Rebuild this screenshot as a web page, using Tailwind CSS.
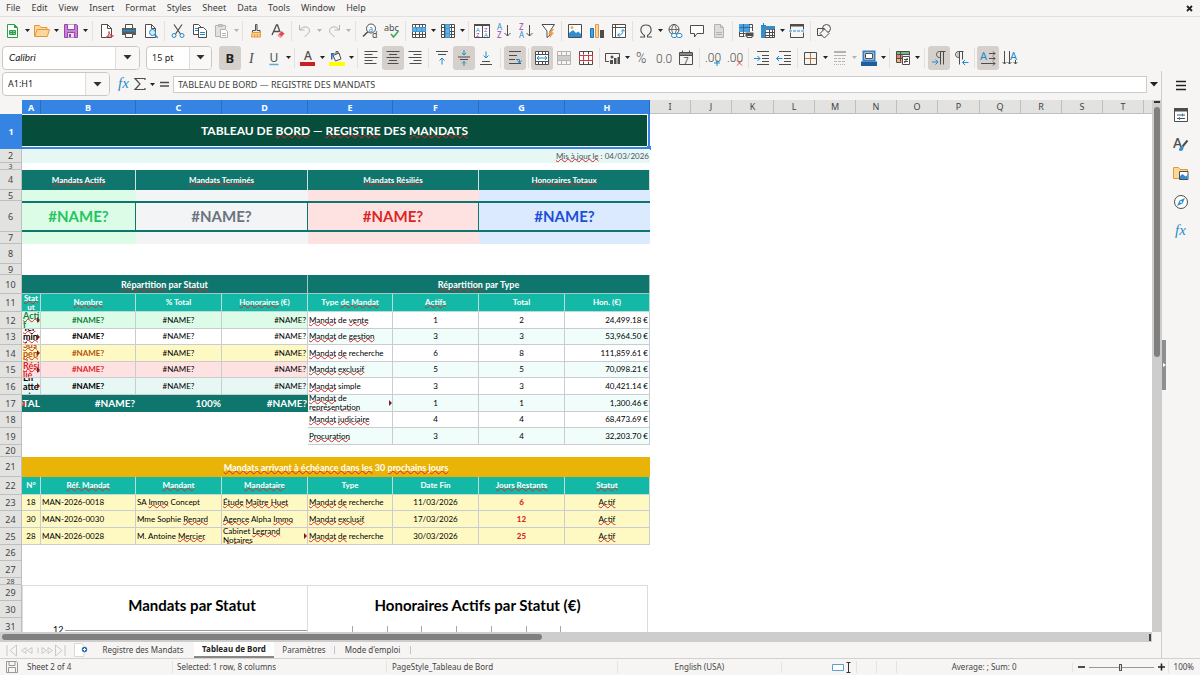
<!DOCTYPE html>
<html lang="fr">
<head>
    <meta charset="UTF-8">
    <meta name="viewport" content="width=device-width, initial-scale=1.0">
    <title>Registre des Mandats - Calc</title>
    <script src="https://cdn.jsdelivr.net/npm/@tailwindcss/browser@4"></script>
</head>
<body class="flex h-screen flex-col overflow-hidden bg-[#f6f5f4] font-['Noto_Sans',sans-serif] text-[9px] text-[#3d3d3d]">

    <!-- Menu -->
    <header class="flex h-[17px] shrink-0 items-center justify-between border-b border-[#e2e0de] pr-[7px] pl-[6px]">
        <nav class="flex gap-[11px]">
            <a href="#">File</a>
            <a href="#">Edit</a>
            <a href="#">View</a>
            <a href="#">Insert</a>
            <a href="#">Format</a>
            <a href="#">Styles</a>
            <a href="#">Sheet</a>
            <a href="#">Data</a>
            <a href="#">Tools</a>
            <a href="#">Window</a>
            <a href="#">Help</a>
        </nav>
        <button aria-label="Close document">
            <svg class="size-[7px]" viewBox="0 0 7 7" stroke="#222" stroke-width="1.8"><path d="M1 1l5 5M6 1L1 6"/></svg>
        </button>
    </header>

    <!-- Barre standard -->
    <div id="standard-bar" class="flex h-[27px] shrink-0 items-center pl-[2px]"></div>

    <!-- Barre de formatage -->
    <div class="flex h-[27px] shrink-0 items-center pl-[2px]">
        <div class="mr-[6px] flex h-6 w-[138px] rounded-[4px] border border-[#cdc7c2] bg-white">
            <input aria-label="Font name" value="Calibri" class="w-0 flex-1 px-[6px] font-[Lato,sans-serif] text-[10px] text-[#222] italic outline-none">
            <button aria-label="Font list" class="flex w-6 items-center justify-center rounded-r-[3px] border-l border-[#e0ddda] bg-[#f9f8f7]">
                <svg class="h-[5px] w-[9px]" viewBox="0 0 9 5"><path d="M.5 0h8L4.500 4.500z" fill="#2e3436"/></svg>
            </button>
        </div>
        <div class="mr-[7px] flex h-6 w-[66px] rounded-[4px] border border-[#cdc7c2] bg-white">
            <input aria-label="Font size" value="15 pt" class="w-0 flex-1 px-[5px] text-[9px] text-[#222] outline-none">
            <button aria-label="Size list" class="flex w-[22px] items-center justify-center rounded-r-[3px] border-l border-[#e0ddda] bg-[#f9f8f7]">
                <svg class="h-[5px] w-[9px]" viewBox="0 0 9 5"><path d="M.5 0h8L4.500 4.500z" fill="#2e3436"/></svg>
            </button>
        </div>
        <div id="format-bar" class="flex items-center"></div>
    </div>

    <main class="flex min-h-0 flex-1">
        <div class="flex min-w-0 flex-1 flex-col border-r border-[#cfccc9]">

            <!-- Barre de formule -->
            <div class="flex h-[29px] shrink-0 items-center pb-[3px] pl-[2px]">
                <div class="flex h-6 w-[108px] rounded-[4px] border border-[#cdc7c2] bg-white">
                    <input aria-label="Name box" value="A1:H1" class="w-0 flex-1 px-[5px] text-[9px] text-[#222] outline-none">
                    <button aria-label="Named ranges" class="flex w-6 items-center justify-center rounded-r-[3px] border-l border-[#e0ddda] bg-[#f9f8f7]">
                        <svg class="h-[5px] w-[9px]" viewBox="0 0 9 5"><path d="M.5 0h8L4.500 4.500z" fill="#2e3436"/></svg>
                    </button>
                </div>
                <div id="formula-bar" class="mr-px ml-[6px] flex items-center"></div>
                <input aria-label="Input line" value="TABLEAU DE BORD — REGISTRE DES MANDATS" class="h-[17px] min-w-0 flex-1 border border-[#cdcac7] bg-white px-[4px] text-[9px] text-[#3d3d3d] outline-none">
                <button aria-label="Expand formula bar" class="flex w-[14px] items-center justify-center">
                    <svg class="h-[5px] w-[8px]" viewBox="0 0 8 5"><path d="M0 0h8L4 4.500z" fill="#222"/></svg>
                </button>
            </div>

            <!-- Feuille -->
            <div class="flex min-h-0 flex-1">
                <div class="relative min-w-0 flex-1 overflow-hidden bg-white">
                    <table class="w-full table-fixed border-separate border-spacing-0 font-[Lato,sans-serif] text-[8px] leading-[9px] text-black">
                        <colgroup id="cols"></colgroup>
                        <thead class="font-['Noto_Sans',sans-serif] text-[9px]"><tr id="heads"></tr></thead>
                        <tbody id="sheet"></tbody>
                    </table>

                    <!-- Graphiques posés sur la feuille -->
                    <div class="absolute top-[485px] left-[22px] flex font-[Lato,sans-serif] text-black">
                        <section class="h-[200px] w-[286px] border border-[#dcdcdc] bg-white">
                            <h2 class="pt-[8px] pl-[54px] text-center text-[15px] leading-[22px] font-bold">Mandats par Statut</h2>
                            <div class="mt-[8px] flex items-center pl-[30px]">
                                <span class="text-[9px] leading-[12px]">12</span>
                                <span class="ml-[2px] h-px flex-1 bg-[#9a9a9a]"></span>
                            </div>
                        </section>
                        <section class="h-[200px] w-[340px] border border-l-0 border-[#dcdcdc] bg-white">
                            <h2 class="pt-[8px] text-center text-[15px] leading-[22px] font-bold">Honoraires Actifs par Statut (€)</h2>
                            <svg class="mt-[10px] ml-[44px] h-5 w-[210px]" viewBox="0 0 210 20" stroke="#a8a8a8" stroke-width="1">
                                <path d="M.5 0v20M35.500 0v20M69.500 0v20M104.500 0v20M139.500 0v20M174.500 0v20M208.500 0v20"/>
                            </svg>
                        </section>
                    </div>
                </div>
                <div class="flex w-[9px] flex-col items-center bg-[#cdcdcd]">
                    <span class="mt-px mb-[4px] h-[2px] w-[6px] bg-[#333]"></span>
                    <span class="h-[47%] w-[6px] rounded-full bg-[#7f7f7f]"></span>
                </div>
            </div>

            <div class="flex h-[10px] shrink-0 pr-[9px]">
                <div class="flex flex-1 items-center justify-between bg-[#cdcdcd] pr-px pl-[2px]">
                    <span class="h-[6px] w-[47%] rounded-full bg-[#7f7f7f]"></span>
                    <span class="h-[7px] w-[2px] bg-[#444]"></span>
                </div>
            </div>

            <!-- Onglets -->
            <div class="flex h-[16px] shrink-0 items-center">
                <svg class="ml-[6px] h-[13px] w-[60px]" viewBox="0 0 60 13" fill="none" stroke="#cbc8c5" stroke-width="1">
                    <path d="M1 1v11M10.500 1L4 6.500l6.500 5.500zM20 3.500l-4.500 3 4.500 3zM26 3.500l-4.500 3 4.500 3zM32 3.500v6M36 3.500l4.500 3-4.500 3zM42 3.500l4.500 3-4.500 3zM49.500 1L56 6.500 49.500 12zM59 1v11"/>
                </svg>
                <button aria-label="Add sheet" class="ml-[8px]">
                    <svg class="h-[14px] w-[14px]" viewBox="0 0 14 14"><path d="M.5.5h7l2.500 2.500v10.500H.5z" fill="#fff" stroke="#dad7d4"/><circle cx="10.500" cy="6.500" r="2.700" fill="#2a6fb5"/><path d="M10.500 5v3M9 6.500h3" stroke="#fff"/></svg>
                </button>
                <nav class="ml-[4px] flex h-full text-[8px] text-[#444]">
                    <a href="#" class="flex w-[102px] items-center justify-center">Registre des Mandats</a>
                    <a href="#" class="flex w-[80px] items-center justify-center border-b-2 border-[#8a8886] bg-white font-bold text-[#222]">Tableau de Bord</a>
                    <a href="#" class="flex w-[60px] items-center justify-center">Paramètres</a>
                    <span class="my-[4px] w-px bg-[#c5c2bf]"></span>
                    <a href="#" class="flex w-[75px] items-center justify-center">Mode d'emploi</a>
                    <span class="my-[4px] w-px bg-[#c5c2bf]"></span>
                </nav>
            </div>
        </div>

        <!-- Volet latéral -->
        <aside class="relative w-[38px] shrink-0">
            <div id="side-bar" class="flex flex-col items-center"></div>
            <button aria-label="Hide sidebar" class="absolute top-1/2 left-0 flex h-[50px] w-[4px] -translate-y-1/2 items-center justify-center bg-[#8f8f8f]">
                <svg class="h-[4px] w-[3px]" viewBox="0 0 3 4"><path d="M0 0l3 2-3 2z" fill="#fff"/></svg>
            </button>
        </aside>
    </main>

    <!-- Barre d'état -->
    <footer class="flex h-[17px] shrink-0 items-center border-t border-[#d3d0cd] text-[8px] text-[#444]">
        <svg class="ml-[6px] size-3" viewBox="0 0 12 12" fill="none" stroke="#999"><path d="M.5.5h10l1 1v10H.5zM3 .5v4h6v-4M2.500 11.500v-5h7v5"/></svg>
        <span class="ml-[9px] w-[145px]">Sheet 2 of 4</span>
        <span class="w-[214px] border-l border-[#e6e4e2] pl-[4px]">Selected: 1 row, 8 columns</span>
        <span class="w-[231px] border-l border-[#e6e4e2] pl-[5px]">PageStyle_Tableau de Bord</span>
        <span class="flex-1 border-l border-[#e6e4e2] text-center">English (USA)</span>
        <span class="flex w-[75px] items-center gap-[3px] border-l border-[#e6e4e2] pl-[50px]">
            <svg class="h-[11px] w-[20px] shrink-0" viewBox="0 0 20 11" fill="none"><path d="M.5 2.500h11v6H.5z" fill="#fff" stroke="#5b9fce"/><path d="M14.500.5h4M14.500 10.500h4M16.500.5v10" stroke="#333"/></svg>
        </span>
        <span class="h-3 w-[20px] border-l border-[#e6e4e2]"></span>
        <span class="h-3 w-[20px] border-l border-[#e6e4e2]"></span>
        <span class="w-[176px] border-l border-[#e6e4e2] text-center">Average: ; Sum: 0</span>
        <span class="flex items-center border-l border-[#e6e4e2] pl-[5px]">
            <button aria-label="Zoom out"><svg class="size-[8px]" viewBox="0 0 8 8" stroke="#222" stroke-width="1.600"><path d="M0 4h7"/></svg></button>
            <input type="range" aria-label="Zoom" min="0" max="200" value="98" class="mx-[3px] h-[9px] w-[65px] appearance-none bg-[linear-gradient(#999,#999)] bg-[length:100%_1px] bg-center bg-no-repeat [&::-webkit-slider-thumb]:h-[7px] [&::-webkit-slider-thumb]:w-[3px] [&::-webkit-slider-thumb]:appearance-none [&::-webkit-slider-thumb]:border [&::-webkit-slider-thumb]:border-[#555] [&::-webkit-slider-thumb]:bg-[#ddd]">
            <button aria-label="Zoom in"><svg class="size-[8px]" viewBox="0 0 8 8" stroke="#222" stroke-width="1.600"><path d="M1 4h7M4.500.5v7"/></svg></button>
        </span>
        <span class="mr-[6px] ml-[3px] border-l border-[#e6e4e2] pl-[5px]">100%</span>
    </footer>

    <script>
    const D = '#4d4d4d', B = '#1e8bcd', G = '#b5b2af';
    // petit raccourci pour les tracés sans remplissage
    const p = (d, c = D, w = 1, f = 'none') => `<path d="${d}" fill="${f}" stroke="${c}" stroke-width="${w}"/>`;
    const f = (d, c) => `<path d="${d}" fill="${c}"/>`;
    const dash = (d, c, a) => `<path d="${d}" stroke="${c}" stroke-dasharray="${a}"/>`;
    const t = (x, y, s, txt, c = D, extra = '') => `<text x="${x}" y="${y}" font-size="${s}" fill="${c}" font-family="Noto Sans, sans-serif" ${extra}>${txt}</text>`;
    const thin = 'font-weight="300" style="font-family:Roboto"';
    const serif = 'font-style="italic" style="font-family:Liberation Serif"';
    const grid = 'M1.500 1.500h13v13h-13zM1.500 4.500h13M1.500 8.500h13M1.500 11.500h13M4.500 1.500v13M8.500 1.500v13M11.500 1.500v13';

    const icons = {
        new: p('M2.500 1.500h7l3 3v10h-10z', '#2e9e49', 1, '#fff') + f('M9 1l4 4H9z', '#2e9e49') + p('M4.500 7.500h6v4h-6zM4.500 9.500h6M7.500 7.500v4', '#2e9e49', 1, '#8fd19e'),
        open: p('M.5 13.500v-11h5l1.500 2h6v2', '#e8963a', 1, '#fbd8a0') + p('M.8 13.500l2.200-7h12.500l-2.200 7z', '#e8963a', 1, '#fcd79b'),
        save: p('M1.500 1.500h12l1 1v12h-13z', '#9a45ad', 1, '#c583d3') + p('M4.500 1.500v5h7v-5', '#9a45ad', 1, '#fff') + p('M4.500 14.500v-5h7v5', '#9a45ad', 1, '#f3def7') + f('M6 11h2v3H6z', '#9a45ad'),
        pdf: p('M2.500 1.500h6l4 4v9h-10z', D, 1, '#fff') + p('M8.500 1.500v4h4') + p('M7 14.500c2-1 3.500-4 3-6 0 3 2 4.500 4.500 4.500-3-.5-5 0-7.500 1.500z', '#d9383a', 1),
        print: p('M4.500 5v-3.500h7V5', D, 1, '#fff') + f('M1 5h14v7H1z', '#5c5c5c') + p('M4.500 10.500h7v4h-7z', D, 1, '#fff') + f('M2 7h12v1.500H2z', B),
        preview: p('M2.500 1.500h6l4 4v9h-10z', D, 1, '#fff') + p('M8.500 1.500v4h4') + `<circle cx="9.500" cy="9.500" r="3" fill="#d4eafa" stroke="${B}"/>` + p('M11.700 11.700l3 3', B, 1.500),
        cut: p('M4 1.500l6.500 9.500M12 1.500L5.500 11', D, 1.200) + `<circle cx="4" cy="12.500" r="2" fill="none" stroke="${B}"/><circle cx="12" cy="12.500" r="2" fill="none" stroke="${B}"/>`,
        copy: p('M1.500 1.500h5l3 3v7h-8z', D, 1, '#fff') + p('M3 5.500h4M3 7.500h3', B) + p('M6.500 4.500h5l3 3v7h-8z', D, 1, '#fff') + p('M8 9.500h5M8 11.500h5', B),
        paste: p('M1.500 2.500h10v11h-10z', G, 1, '#e3e1df') + p('M4.500 1.500h4v2h-4z', G, 1, '#ccc') + p('M6.500 6.500h5l2 2v6h-7z', G, 1, '#fff') + p('M8 10.500h4M8 12.500h4', G),
        clone: p('M7.500 1.500h1.500v6h3v2H4.500v-2h3z', D, 1, '#eee') + p('M4 9.500h8.500v2H4z', '#e8963a', 1, '#fbd8a0') + p('M3.500 11.500v2.500h9v-2.500M6.500 12v2M9.500 12v2', '#e8963a', 1, '#fcd79b'),
        clear: p('M2 12L6.500 2h1L10 9M4 8.500h5', D, 1.300) + f('M7.500 12.500l4-4.500 3 2.500-4 4.500z', '#e5484d') + f('M7.500 12.500l1.300-1.500 3 2.500-1.300 1.500z', '#f3a3a5'),
        undo: p('M2.500 2v5h5M2.800 7C5 3 12 2.500 12.500 7.500c0 3-3 4-5 6.500', G),
        redo: p('M13.500 2v5h-5M13.200 7C11 3 4 2.500 3.500 7.500c0 3 3 4 5 6.500', G),
        find: `<circle cx="9" cy="5.500" r="4.500" fill="#fff" stroke="${D}"/>` + p('M5.800 8.700L1 13.500', D, 1.500) + t(6.500, 8.500, 8, 'a', B) + t(10, 15, 9, 'd'),
        spell: t(0, 8, 9, 'abc') + p('M7 11l2.500 3 5-6', '#35a854', 1.500),
        row: p(grid, D, 1, '#fff') + f('M1 4h14v5H1z', '#5fb2ea') + p('M1.500 4.500h13v4h-13zM5.500 5v3M10.500 5v3', '#2f7fb8', .6),
        col: p(grid, D, 1, '#fff') + f('M5 1h5v14H5z', '#5fb2ea') + p('M5.500 1.500h4v13h-4zM6 5.500h3M6 10.500h3', '#2f7fb8', .6),
        sort: p('M.5 1.500h15v13H.5zM8.500 1.500v13', D, 1, '#fff') + f('M0 1h16v2H0z', D) + t(2, 8.500, 6, 'A', B) + t(2, 14, 6, 'Z', '#a33fb5') + t(10, 8.500, 6, 'Z', '#a33fb5') + t(10, 14, 6, 'A', B),
        az: t(1, 7, 8, 'A', B) + t(1, 15, 8, 'Z', '#a33fb5') + p('M11.500 2v11M8.500 10l3 3 3-3'),
        za: t(1, 7, 8, 'Z', '#a33fb5') + t(1, 15, 8, 'A', B) + p('M11.500 2v11M8.500 10l3 3 3-3'),
        filter: p('M2 1.500h12.500L10 8v4l-3 2.500V8z', D, 1, '#fff') + f('M12 6l-4 5h2.500l-1 4.500 4.500-6h-2.500l2.500-3.500z', '#f0983a'),
        image: p('M1.500 1.500h13v13h-13z', D, 1, '#fff') + f('M2 14v-4l4-3 3 3 2-1.500 3 2.500v3z', '#2f8fd0') + `<circle cx="5" cy="4.500" r="1.500" fill="#f0b34a"/>`,
        chart: p('M1.500 5.500h3v9h-3z', '#1c71b8', 1, '#4aa3df') + p('M6.500 1.500h3v13h-3z', '#e8963a', 1, '#fbd8a0') + f('M11 7h4v8h-4z', D),
        pivot: p('M1.500 1.500h13v13h-13zM1.500 4.500h13M4.500 1.500v13', D, 1, '#fff') + p('M7 12c3 .5 5-1.500 5-5M10.300 8.500l1.700-2 2 2M8.500 10.300l-2 1.700 2 1.500', B),
        omega: p('M2 14h4.500v-1.500C1 9 2 2 8 2s7 7 1.500 10.500V14H14', D, 1.100),
        link: `<circle cx="7" cy="6.500" r="5" fill="none" stroke="${D}"/>` + p('M2 6.500h10M7 1.500c-3 3-3 7 0 10M7 1.500c3 3 3 7 0 10', D, .8) + `<rect x="4.500" y="10.500" width="5.500" height="4" rx="2" fill="#fff" stroke="${B}"/><rect x="9.500" y="10.500" width="5.500" height="4" rx="2" fill="#fff" stroke="${B}"/>`,
        comment: p('M1.500 2.500h13v8H8l-2.500 3.500v-3.500h-4z', D, 1, '#fff'),
        headfoot: p('M3.500 1.500h6l3 3v10h-9z', G, 1, '#dedcda') + p('M5 9.500h6M5 11.500h6M9.500 1.500v3h3', G),
        area: p('M1.500 13.500v-12h13V8M1.500 10.500h6M5.500 8v5.500M1.500 13.500h5', D, 1, '#fff') + f('M1 1h10v8H1z', '#4aa3df') + p('M1.500 4.500h13M5.500 1v8M11.500 1v8', '#2b5f8c', .8) + f('M7.500 9.500h8v4h-8z', D) + p('M9 12.500h5v2H9z', D, 1, '#fff'),
        freeze: p('M1.500 3.500h13v11h-13zM9.500 6.500v8M12.500 6.500v8M5 9.500h9.500M5 12.500h9.500', D, 1, '#fff') + f('M1 3h14v3H1zM1 3h4v12H1z', '#2f8fd0') + p('M5.500 6.500h9M5.500 6.500v8', D, .8) + p('M3.500 0v5M1 2.500h5', B),
        split: f('M1 1h14v2.500H1z', D) + p('M1.500 2v4.500M14.500 2v4.500M1.500 9.500v5h13v-5') + dash('M0 8h16', B, '3 1'),
        shapes: p('M1.500 5.500h7v7h-7z') + `<circle cx="10.500" cy="5.500" r="4" fill="none" stroke="${D}"/>` + p('M8.500 6l4.500 4.500-4.500 4.500L4 10.500z', D, 1, '#f6f5f4'),

        bold: t(3.500, 13, 13, 'B', '#222', 'font-weight="bold"'),
        italic: t(5, 13, 14, 'I', D, serif),
        underline: t(3.500, 11.500, 12, 'U') + p('M3.500 14.500h9', '#5fa8dc', 1.500),
        color: t(4, 10, 12, 'A', D, 'font-weight="500"') + f('M0 12h15v4H0z', '#c9211e'),
        fill: f('M0 12h16v4H0z', '#ff0') + p('M4 5.500l6-2.500 2 6-5.500 2zM7 4V1.500h2V4') + f('M2 3h4l-2.500 2.500v4H2z', '#2a6fb5'),
        left: p('M1.500 1.500h13M1.500 4.500h8M1.500 7.500h13M1.500 10.500h8M1.500 13.500h12'),
        center: p('M1.500 1.500h13M4 4.500h8M1.500 7.500h13M4 10.500h8M2.500 13.500h11'),
        right: p('M1.500 1.500h13M6.500 4.500h8M1.500 7.500h13M6.500 10.500h8M2.500 13.500h12'),
        top: p('M2 1.500h12M4 4.500h8') + p('M8 14.500V8M5.500 10.500L8 8l2.500 2.500', B),
        middle: p('M2 7h12M4 9.500h8') + p('M8 0v5M6 3l2 2 2-2M8 16v-4.500M6 13.500l2-2 2 2', B),
        bottom: p('M4 11.500h8M2 14.500h12') + p('M8 1.500V8M5.500 5.500L8 8l2.500-2.500', B),
        wrap: p('M2 1.500h12M2 5.500h8M2 9.500h6M2 13.500h12') + p('M9 9.500h3.500v3M10.500 10.500l2 2.500 2-2.500', B),
        merge: p('M1.500 1.500h13v13h-13zM1.500 4.500h13M1.500 11.500h13M4.500 1.500v3M8.500 1.500v3M11.500 1.500v3M4.500 11.500v3M8.500 11.500v3M11.500 11.500v3', D, 1, '#fff') + p('M3 8h10M5 6L3 8l2 2M11 6l2 2-2 2', B),
        mergecells: f('M1 5h14v6H1z', '#cfcdcb') + p('M1.500 1.500h13v13h-13zM1.500 5.500h13M1.500 10.500h13M5.500 1.500v4M10.500 1.500v4M5.500 10.500v4M10.500 10.500v4', G),
        unmerge: p('M1.500 1.500h13v13h-13zM5.500 1.500v3M10.500 1.500v3M5.500 11.500v3M10.500 11.500v3', D, 1, '#fff') + p('M1.500 5.500h13v5h-13zM5.500 5.500v5M10.500 5.500v5', '#d9383a'),
        money: p('M4 11.500H.5v-8h14V7') + `<circle cx="7" cy="7" r="1.500" fill="${D}"/>` + f('M5 10h3v4H5zM9 8h2.500v6H9zM12.500 7h2.500v7h-2.500z', D),
        percent: t(2, 13, 14, '%', D, thin),
        number: t(0, 12.500, 12, '0.0', D, thin),
        date: p('M1.500 2.500h13v12h-13zM1.500 5.500h13M4.500.5v3M11.500.5v3') + f('M2 3h12v2H2z', '#8a8886') + t(5.500, 13.500, 9, '7'),
        decadd: t(0, 12, 12, '.00', D, thin) + p('M12 10v6M9 13h6', B),
        decdel: t(0, 12, 12, '.00', D, thin) + p('M10 10.500l5 5M15 10.500l-5 5', '#e5484d'),
        indent: p('M3 1.500h12M8 5.500h7M8 8.500h7M8 11.500h7M3 14.500h12') + p('M0 8.500h6M3.500 6L6 8.500 3.500 11', B),
        outdent: p('M3 1.500h12M8 5.500h7M8 8.500h7M8 11.500h7M3 14.500h12') + p('M6.500 8.500h-6M3 6L.5 8.500 3 11', B),
        borders: p('M7.500 2.500v12M1.500 8.500h12', '#b07a45') + p('M1.500 2.500h12v12h-12z'),
        lines: p('M2 2h12', G, 2) + p('M2 5.500h12', G) + dash('M2 8.500h12M2 11.500h12', G, '3 1') + dash('M2 14.500h12', G, '1 1'),
        bordercol: p('M2.500 1.500h11v9h-11z', '#3a7fc0', 2, '#fff') + p('M4.500 3.500h7v5h-7z') + f('M0 11.500h16V16H0z', '#1c5f9e'),
        cond: f('M1 1h13v3H1z', '#69c17d') + f('M1 5h7v3H1z', '#ef7a7c') + f('M1 9h6v3H1z', '#f3b46b') + p('M1.500 1.500h13v4M1.500 1.500v11h5M1.500 4.500h13M1.500 8.500h6M5.500 1.500v10') + p('M7.500 6.500h7v8h-7z', D, 1, '#fff') + p('M9 9.500h4M9 11.500h4M12.500 8l-3 5'),
        ltr: p('M14.500 1.500H8.500c-4 0-4 6 0 6h1M9.500 1.500v13M12.500 1.500v13') + p('M1 12h6M4.500 9.500L7 12l-2.500 2.500', B),
        rtl: f('M7 2H5.500c-3 0-3 5 0 5H7z', '#c9c6c3') + p('M10.500 1.500H5.500c-4 0-4 6 0 6h1M6.500 1.500v13M9.500 1.500v8') + p('M9.500 12.500h6M12 10l-2.500 2.500L12 15', B),
        horiz: t(0, 10, 11, 'A', B) + p('M9 3.500h6M13 1.500l2 2-2 2M9 8.500h6M13 6.500l2 2-2 2M1 13.500h14M13 11.500l2 2-2 2'),
        vert: t(8, 10, 11, 'A', B) + p('M2.500 1v13M.5 12l2 2 2-2M7.500 1v13M5.500 12l2 2 2-2M13.500 10v4M11.500 12l2 2 2-2'),

        fx: t(2, 12, 15, 'fx', B, serif),
        sum: p('M13 4V2.500H3L8 8l-5 5.500h10V12', D, 1.200),
        equal: p('M4 6.500h9M4 10h9', D, 1.500),

        menu: p('M3 3.500h10M3 7.500h10M3 11.500h10', '#222', 1.400),
        props: p('M1.500 2h13v12.500h-13z', D, 1, '#fff') + f('M1 1h14v3.500H1z', D) + p('M4 8h8M4 11.500h8') + p('M9.500 6.500v3M6.500 10v3', B),
        styles: t(0, 12, 14, 'A', D, 'font-weight="500"') + p('M14.500 4.500l-5 6', D, 2) + f('M6 14.500c0-3 2-4.500 4-4l.500 1c0 3-2 4-4.500 3z', '#2f8fd0'),
        gallery: p('M.5 13.500v-11h5l1.500 2h7.500v9z', '#e8963a', 1, '#fcd79b') + p('M6.500 6.500h8.500v8H6.500z', D, 1, '#fff') + f('M7 14v-3l2.500-2 3 2.500 2-1.500v4z', '#2f8fd0'),
        navigator: `<circle cx="8" cy="8" r="6.500" fill="#fff" stroke="${D}"/>` + f('M12 4l-2.500 5.500L4 12l2.500-5.500z', '#2f8fd0') + `<circle cx="8" cy="8" r="1" fill="#fff"/>`
    };

    // '+' : bouton avec flèche, '*' : bouton enfoncé, '|' et '||' : séparateurs
    const standard = 'new+ open+ save+ || pdf print preview | cut copy paste+ | clone clear | undo+ redo+ || find spell | row+ col+ | sort az za filter | image chart pivot | omega+ link comment headfoot | area freeze+ split | shapes';
    const format = 'bold* italic underline+ | color+ fill+ | left center* right | top middle* bottom || wrap* | merge* mergecells unmerge | money+ percent number date | decadd decdel | indent outdent | borders+ lines+ bordercol+ | cond+ || ltr* rtl | horiz* vert';
    const faded = ['paste', 'undo', 'redo', 'lines'];

    function tools(list) {
        return list.split(' ').map(item => {
            if (item === '|') return '<span class="flex h-5 w-[5px] shrink-0 justify-center"><i class="w-px bg-[#e3e1de]"></i></span>';
            if (item === '||') return '<span class="flex h-5 w-[7px] shrink-0 justify-center"><i class="w-px bg-[#e3e1de]"></i></span>';
            const name = item.replace(/[+*]/, '');
            const on = item.endsWith('*') ? 'rounded-[3px] bg-[#d5d0cc]' : '';
            let html = `<button aria-label="${name}" class="flex h-6 w-[22px] shrink-0 items-center justify-center ${on}"><svg class="size-4 overflow-visible" viewBox="0 0 16 16">${icons[name]}</svg></button>`;
            if (item.endsWith('+')) {
                html += `<button aria-label="${name} options" class="flex h-6 w-[7px] shrink-0 items-center justify-center"><svg class="h-[3px] w-[5px]" viewBox="0 0 5 3"><path d="M0 0h5L2.500 3z" fill="${faded.includes(name) ? '#b5b2af' : '#222'}"/></svg></button>`;
            }
            return html;
        }).join('');
    }
    document.getElementById('standard-bar').innerHTML = tools(standard);
    document.getElementById('format-bar').innerHTML = tools(format);
    document.getElementById('formula-bar').innerHTML = ['fx', 'sum', '+', 'equal'].map(n => n === '+'
        ? '<button aria-label="Functions" class="flex w-[8px] items-center justify-center"><svg class="h-[3px] w-[5px]" viewBox="0 0 5 3"><path d="M0 0h5L2.500 3z" fill="#222"/></svg></button>'
        : `<button aria-label="${n}" class="flex h-6 w-4 items-center justify-center"><svg class="size-4 overflow-visible" viewBox="0 0 16 16">${icons[n]}</svg></button>`).join('');
    document.getElementById('side-bar').innerHTML = ['menu', 'props', 'styles', 'gallery', 'navigator', 'fx'].map(n =>
        `<button aria-label="${n}" class="flex h-[29px] w-6 items-center justify-center"><svg class="size-4 overflow-visible" viewBox="0 0 16 16">${icons[n]}</svg></button>`).join('');

    // Colonnes
    const widths = [22, 19, 95, 86, 86, 85, 86, 86, 85, 41, 41, 42, 41, 41, 41, 41, 42, 41, 41, 41, 41];
    document.getElementById('cols').innerHTML = widths.map(w => `<col style="width:${w}px">`).join('') + '<col>';
    document.getElementById('heads').innerHTML = '<td class="h-[14px] bg-[#f6f5f4]"></td>' + 'ABCDEFGHIJKLMNOPQRST'.split('').map((c, i) => i < 8
        ? `<th class="border-r border-[#2a6cc0] bg-[#3584e4] p-0 font-bold text-white">${c}</th>`
        : `<th class="border-r border-b border-[#bfbfbf] bg-[#e2e2e1] p-0 font-normal text-[#444]">${c}</th>`).join('') + '<th class="border-b border-[#bfbfbf] bg-[#e2e2e1] p-0"></th>';

    // Styles de cellules
    const line = 'border-r border-b border-[#c9cdd2]';
    const kpi = 'justify-center bg-[#0f766e] font-bold text-white border-r border-[#cfe3e1]';
    const band = 'justify-center bg-[#0f766e] text-[9px] font-bold text-white border-r border-b border-[#9fc9c5]';
    const head = 'justify-center text-center bg-[#14b8a6] font-bold text-white border-r border-b border-[#b9dcd8]';
    const big = 'justify-center border-y-2 border-[#0f766e] text-[15px] font-bold';
    const tot = 'justify-end bg-[#0f766e] text-[10px] font-bold text-white';
    const mid = 'justify-center ' + line, end = 'justify-end ' + line, start = 'justify-start ' + line;
    const N = '#NAME?';
    const alt = 'bg-[#f0fdfa] ', yel = 'bg-[#fef9c3] ';

    // Une cellule = [colspan, texte, classes, débordement] ; _mot_ = souligné par le correcteur
    const type = (n, a, b, h, bg) => [[1, n, bg + start, n.includes('<br>')], [1, a, bg + mid], [1, b, bg + mid], [1, h, bg + end]];
    const due = (n, ref, who, agent, kind, date, days) => [[1, n, yel + mid], [1, ref, yel + start], [1, who, yel + start], [1, agent, yel + start, agent.includes('<br>')],
        [1, kind, yel + start], [1, date, yel + mid], [1, days, yel + mid + ' font-black text-[#dc2626]'], [1, '_Actif_', yel + mid]];
    const stat = (name, bg, col) => [[1, name, bg + col + start + ' text-[9px] font-bold', true], [1, N, bg + col + mid + ' font-bold'], [1, N, bg + mid], [1, N, bg + end]];

    const rows = [
        [35, 'title'],
        [14, [[8, '_Mis à jour le_ : 04/03/2026', 'justify-end bg-[#e6f7f4] text-[#4b5563]']]],
        [7, []],
        [20, [[2, '_Mandats Actifs_', kpi], [2, '_Mandats Terminés_', kpi], [2, '_Mandats Résiliés_', kpi], [2, '_Honoraires Totaux_', kpi]]],
        [11, [[2, '', 'bg-[#dcfce7]'], [2, '', 'bg-[#f3f4f6]'], [2, '', 'bg-[#fee2e2]'], [2, '', 'bg-[#dbeafe]']]],
        [31, [[2, N, 'border-r bg-[#dcfce7] text-[#22c55e] ' + big], [2, N, 'border-r bg-[#f3f4f6] text-[#6b7280] ' + big], [2, N, 'border-r bg-[#fee2e2] text-[#dc2626] ' + big], [2, N, 'bg-[#dbeafe] text-[#1d4ed8] ' + big]]],
        [12, [[2, '', 'bg-[#dcfce7]'], [2, '', 'bg-[#f3f4f6]'], [2, '', 'bg-[#fee2e2]'], [2, '', 'bg-[#dbeafe]']]],
        [20, []],
        [11, []],
        [19, [[4, '_Répartition_ par _Statut_', band], [4, '_Répartition_ par Type', band]]],
        [18, [[1, '_Stat_<br>_ut_', head], [1, '_Nombre_', head], [1, '% Total', head], [1, '_Honoraires_ (€)', head], [1, 'Type _de Mandat_', head], [1, '_Actifs_', head], [1, 'Total', head], [1, 'Hon. (€)', head]]],
        [17, [...stat('_Acti_<br>_f_', 'bg-[#dcfce7] ', 'text-[#15803d] '), ...type('_Mandat_ de _vente_', 1, 2, '24,499.18 €', '')]],
        [16, [...stat('_Ter_<br>_min_<br>_é_', '', ''), ...type('_Mandat_ de _gestion_', 3, 3, '53,964.50 €', alt)]],
        [17, [...stat('_Sus_<br>_pen_<br>_du_', yel, 'text-[#b45309] '), ...type('_Mandat_ _de_ recherche', 6, 8, '111,859.61 €', '')]],
        [16, [...stat('_Rési_<br>_lié_', 'bg-[#fee2e2] ', 'text-[#dc2626] '), ...type('_Mandat_ _exclusif_', 5, 5, '70,098.21 €', alt)]],
        [17, [...stat('En<br>atte<br>nte', 'bg-[#e6f7f4] ', ''), ...type('_Mandat_ simple', 3, 3, '40,421.14 €', '')]],
        [17, [[1, 'TOTAL', tot, 'left'], [1, N, tot], [1, '100%', tot], [1, N, tot], ...type('_Mandat_ de<br>_représentation_', 1, 1, '1,300.46 €', alt)]],
        [16, [[4, '', ''], ...type('_Mandat_ _judiciaire_', 4, 4, '68,473.69 €', '')]],
        [17, [[4, '', ''], ...type('_Procuration_', 3, 4, '32,203.70 €', alt)]],
        [12, []],
        [20, [[8, '_Mandats arrivant à échéance dans les_ 30 _prochains jours_', 'justify-center bg-[#eab308] text-[9px] font-bold text-white']]],
        [18, [[1, 'N°', head], [1, '_Réf. Mandat_', head], [1, '_Mandant_', head], [1, '_Mandataire_', head], [1, 'Type', head], [1, 'Date Fin', head], [1, '_Jours Restants_', head], [1, '_Statut_', head]]],
        [16, due(18, 'MAN-2026-0018', 'SA _Immo_ Concept', '_Étude_ _Maître Huet_', '_Mandat_ _de_ recherche', '11/03/2026', 6)],
        [17, due(30, 'MAN-2026-0030', 'Mme Sophie _Renard_', '_Agence_ Alpha _Immo_', '_Mandat_ _exclusif_', '17/03/2026', 12)],
        [17, due(28, 'MAN-2026-0028', 'M. Antoine _Mercier_', 'Cabinet _Legrand_<br>_Notaires_', '_Mandat_ _de_ recherche', '30/03/2026', 25)],
        [16, []], [17, []], [7, []], [16, []], [17, []], [17, []]
    ];

    const spell = s => String(s).replace(/_(.+?)_/g, '<span class="underline decoration-[#dc2626] decoration-wavy decoration-1 underline-offset-[-1px] [text-decoration-skip-ink:none]">$1</span>');

    document.getElementById('sheet').innerHTML = rows.map(([h, cells], i) => {
        const small = h < 10 ? 'text-[7px]' : 'text-[9px]';
        const num = i === 0 ? 'bg-[#3584e4] font-bold text-white' : 'border-r border-b border-[#bfbfbf] bg-[#e2e2e1] font-normal text-[#444]';
        let html = `<tr><th class="p-0 font-['Noto_Sans',sans-serif] ${small} ${num}" style="height:${h}px"><div class="flex items-center justify-center overflow-hidden" style="height:${h - 1}px">${i + 1}</div></th>`;
        if (cells === 'title') {
            html += `<td colspan="8" class="relative border-r-2 border-b-2 border-[#3584e4] p-0"><div class="flex h-[33px] items-center justify-center border-y border-r border-white bg-[#064e3b] text-[12px] font-bold text-white"><span class="whitespace-pre">${spell('TABLEAU DE _BORD_ — _REGISTRE_ DES _MANDATS_')}</span></div><span class="absolute -right-[3px] -bottom-[3px] size-[4px] bg-[#3584e4]"></span></td>`;
        } else {
            html += cells.map(([span, text, cls, over]) => {
                const mark = over === 'left' ? '<i class="absolute left-0 border-y-[3px] border-r-[3px] border-y-transparent border-r-[#ef4444]"></i>'
                    : over ? '<i class="absolute right-0 border-y-[3px] border-l-[3px] border-y-transparent border-l-[#7f1d1d]"></i>' : '';
                return `<td colspan="${span}" class="p-0"><div class="relative flex items-center overflow-hidden px-px ${cls}" style="height:${h}px"><span class="whitespace-nowrap">${spell(text)}</span>${mark}</div></td>`;
            }).join('');
        }
        return html + '</tr>';
    }).join('');
    </script>
</body>
</html>
